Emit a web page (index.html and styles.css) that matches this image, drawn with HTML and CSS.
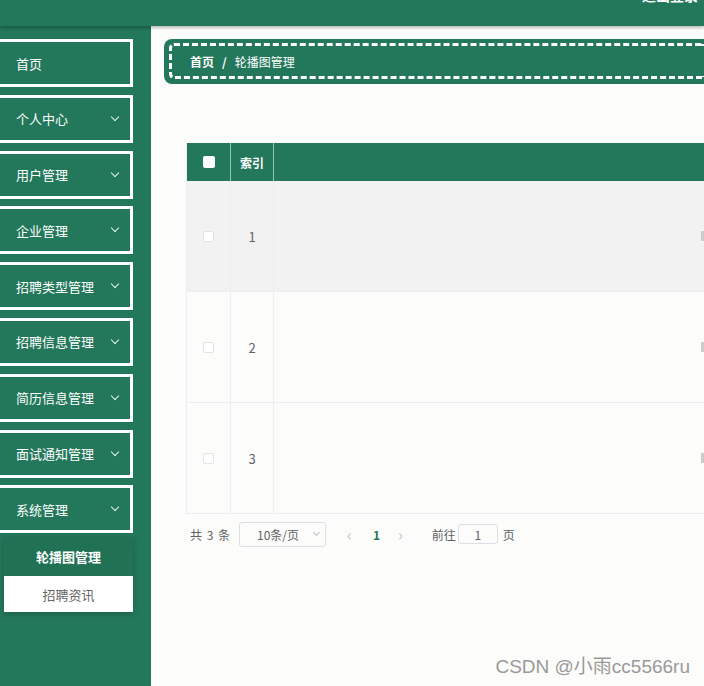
FILE: index.html
```html
<!DOCTYPE html>
<html lang="zh">
<head>
<meta charset="utf-8">
<link rel="stylesheet" href="styles.css">
</head>
<body>
<div class="app">
  <header class="topbar">
    <span class="top-title">退出登录</span>
  </header>
  <div class="body">
    <aside class="sidebar">
      <div class="menu-item"><span>首页</span></div>
      <div class="menu-item"><span>个人中心</span><i class="chev"></i></div>
      <div class="menu-item"><span>用户管理</span><i class="chev"></i></div>
      <div class="menu-item"><span>企业管理</span><i class="chev"></i></div>
      <div class="menu-item"><span>招聘类型管理</span><i class="chev"></i></div>
      <div class="menu-item"><span>招聘信息管理</span><i class="chev"></i></div>
      <div class="menu-item"><span>简历信息管理</span><i class="chev"></i></div>
      <div class="menu-item"><span>面试通知管理</span><i class="chev"></i></div>
      <div class="menu-item"><span>系统管理</span><i class="chev"></i></div>
      <div class="submenu">
        <div class="sub-item active">轮播图管理</div>
        <div class="sub-item">招聘资讯</div>
      </div>
    </aside>
    <main class="main">
      <div class="crumb-outer">
        <div class="crumb">
          <span class="crumb-home">首页</span>
          <span class="crumb-sep">/</span>
          <span class="crumb-cur">轮播图管理</span>
        </div>
      </div>
      <div class="table">
        <div class="tr thead">
          <div class="td c1"><span class="cb cb-head"></span></div>
          <div class="td c2">索引</div>
          <div class="td c3"></div>
        </div>
        <div class="tr row hover">
          <div class="td c1"><span class="cb"></span></div>
          <div class="td c2">1</div>
          <div class="td c3"><span class="cut"></span></div>
        </div>
        <div class="tr row">
          <div class="td c1"><span class="cb"></span></div>
          <div class="td c2">2</div>
          <div class="td c3"><span class="cut"></span></div>
        </div>
        <div class="tr row">
          <div class="td c1"><span class="cb"></span></div>
          <div class="td c2">3</div>
          <div class="td c3"><span class="cut"></span></div>
        </div>
      </div>
      <div class="pager">
        <span class="total">共 3 条</span>
        <span class="sizes">10条/页<i class="chev small"></i></span>
        <span class="arrow">&lsaquo;</span>
        <span class="page-num">1</span>
        <span class="arrow">&rsaquo;</span>
        <span class="goto">前往</span>
        <span class="jump">1</span>
        <span class="goto">页</span>
      </div>
      <div class="watermark">CSDN @小雨cc5566ru</div>
    </main>
  </div>
</div>
</body>
</html>
```

FILE: styles.css
```css
* { box-sizing: border-box; }
html, body {
  margin: 0;
  padding: 0;
  width: 704px;
  height: 686px;
  overflow: hidden;
  font-family: "Noto Sans CJK SC", "Noto Sans", sans-serif;
  font-size: 13px;
}
.app {
  display: flex;
  flex-direction: column;
  height: 686px;
}
.topbar {
  height: 26px;
  background: #23775a;
  box-shadow: 0 2px 3px rgba(0,0,0,0.25);
  position: relative;
  z-index: 2;
  display: flex;
  justify-content: flex-end;
  overflow: hidden;
}
.top-title {
  color: #fff;
  font-weight: bold;
  font-size: 14px;
  margin-top: -15px;
  margin-right: 6px;
}
.body {
  flex: 1;
  display: flex;
}
.sidebar {
  width: 151px;
  background: #23775a;
  padding-top: 13px;
  display: flex;
  flex-direction: column;
  gap: 7.8px;
}
.menu-item {
  width: 136px;
  margin-left: -3px;
  height: 48px;
  flex: none;
  border: 3px solid #fff;
  display: flex;
  align-items: center;
  justify-content: space-between;
  padding: 0 12px 0 16px;
  color: #fff;
  font-size: 13px;
}
.chev {
  width: 6px;
  height: 6px;
  border-right: 1px solid #e9f2ee;
  border-bottom: 1px solid #e9f2ee;
  transform: rotate(45deg);
  margin-top: -4px;
}
.submenu {
  margin-left: 4px;
  width: 129px;
  box-shadow: 0 2px 6px rgba(0,0,0,0.2);
  margin-top: -4px;
}
.sub-item {
  height: 36px;
  display: flex;
  align-items: center;
  justify-content: center;
  background: #fff;
  color: #666;
  font-size: 13px;
}
.sub-item.active {
  background: #217155;
  color: #fff;
  font-weight: bold;
  height: 39px;
}
.main {
  flex: 1;
  background: #fcfcfa;
  padding: 13px 0 0 13px;
  position: relative;
  overflow: hidden;
}
.crumb-outer {
  background: #23775a;
  border-radius: 8px 0 0 8px;
  padding: 4px 0 5px 5px;
  height: 45px;
}
.crumb {
  height: 36px;
  border: 3px dashed #fff;
  border-right: none;
  border-radius: 5px 0 0 5px;
  display: flex;
  align-items: center;
  padding-left: 18px;
  color: #fff;
  font-size: 12px;
}
.crumb-home { font-weight: bold; }
.crumb-sep { margin: 0 8px; font-weight: bold; }
.table {
  margin-top: 59px;
  margin-left: 22px;
  border-left: 1px solid #ebeef5;
}
.tr {
  display: flex;
}
.thead {
  height: 38px;
  background: #23775a;
  color: #fff;
  font-weight: bold;
  font-size: 12px;
}
.thead .td { border-right: 1px solid #8cc9b0; }
.thead .c3 { border-right: none; }
.row {
  height: 111px;
  border-bottom: 1px solid #ebeef5;
  background: #fcfcfa;
  color: #606266;
}
.row.hover { background: #f2f2f2; }
.td {
  display: flex;
  align-items: center;
  justify-content: center;
}
.row .td { border-right: 1px solid #ebeef5; }
.row .c3 { border-right: none; }
.c1 { width: 44px; }
.c2 { width: 43px; }
.c3 { flex: 1; justify-content: flex-end; }
.cb {
  width: 11px;
  height: 11px;
  border: 1px solid #e4e4e4;
  background: #fff;
  border-radius: 2px;
}
.cb-head {
  width: 12px;
  height: 12px;
  border: none;
  background: #fff;
}
.cut {
  width: 3px;
  height: 10px;
  background: #ccc;
}
.pager {
  display: flex;
  align-items: center;
  margin: 7px 0 0 26px;
  color: #606266;
  font-size: 12px;
  height: 26px;
}
.total { margin-right: 9px; word-spacing: 2px; }
.sizes {
  width: 87px;
  height: 25px;
  border: 1px solid #dcdfe6;
  border-radius: 3px;
  display: flex;
  align-items: center;
  justify-content: space-between;
  padding: 0 6px 0 17px;
  color: #606266;
}
.chev.small {
  width: 5px;
  height: 5px;
  border-color: #c0c4cc;
}
.arrow {
  color: #c0c4cc;
  font-size: 16px;
  margin-left: 21px;
}
.page-num {
  color: #23775a;
  font-weight: bold;
  margin-left: 21px;
}
.page-num + .arrow { margin-left: 18px; }
.arrow + .goto { margin-left: 29px; }
.jump {
  width: 40px;
  height: 20px;
  border: 1px solid #dcdfe6;
  border-radius: 3px;
  display: flex;
  align-items: center;
  justify-content: center;
  margin: 0 5px 0 2px;
  color: #606266;
}
.watermark {
  position: absolute;
  right: 14px;
  bottom: 8px;
  font-family: "Liberation Sans", "Noto Sans CJK SC", sans-serif;
  font-size: 19px;
  color: #999;
  letter-spacing: 0;
  text-shadow: 0 0 1px #fff;
}
```
